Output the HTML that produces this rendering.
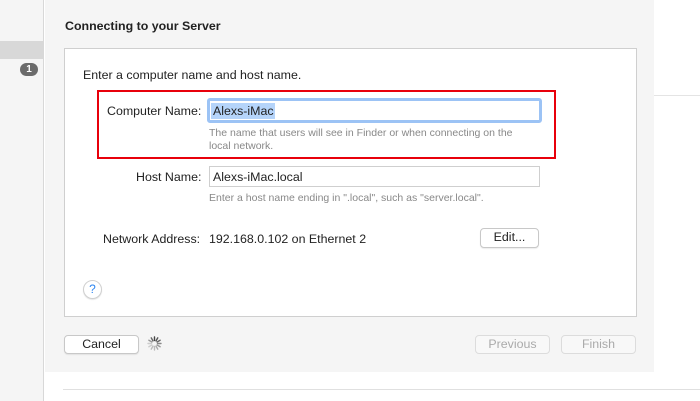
<!DOCTYPE html>
<html><head><style>
*{margin:0;padding:0;box-sizing:border-box}
body{width:700px;height:401px;background:#fff;position:relative;overflow:hidden;font-family:"Liberation Sans",sans-serif;font-size:12.4px;color:#222}
.a{position:absolute}
.t{position:absolute;white-space:nowrap}
.btn{position:absolute;background:#fff;border:1px solid #c8c8c8;border-radius:4px;text-align:center;font-size:12.4px;line-height:17px;box-shadow:0 1px 1px rgba(0,0,0,.08)}
.dis{color:#aaa;background:#f8f8f8;border-color:#dcdcdc;box-shadow:none}
.hint{position:absolute;color:#888;font-size:10.5px;white-space:nowrap}
</style></head><body>
<div class="a" style="left:0;top:0;width:44px;height:401px;background:#f5f5f5;border-right:1px solid #d8d8d8"></div>
<div class="a" style="left:0;top:41px;width:44px;height:18px;background:#d8d8d8"></div>
<div class="a" style="left:20px;top:63px;width:18px;height:13px;border-radius:7px;background:#6b6b6b;color:#fff;font-size:10px;font-weight:bold;text-align:center;line-height:13px">1</div>
<div class="a" style="left:45px;top:0;width:609px;height:372px;background:#f5f5f5"></div>
<div class="a" style="left:654px;top:95px;width:46px;height:1px;background:#e4e4e4"></div>
<div class="a" style="left:63px;top:389px;width:637px;height:1px;background:#e0e0e0"></div>
<div class="t" style="left:65px;top:19px;font-weight:bold;font-size:12.4px">Connecting to your Server</div>
<div class="a" style="left:64px;top:48px;width:573px;height:269px;background:#fff;border:1px solid #cfcfcf"></div>
<div class="t" style="left:83px;top:68px">Enter a computer name and host name.</div>
<div class="a" style="left:97px;top:90px;width:459px;height:69px;border:2px solid #e8000b"></div>
<div class="t" style="left:107px;top:104px">Computer Name:</div>
<div class="a" style="left:207px;top:98px;width:335px;height:25px;border:3px solid #9cc3f5;border-radius:3px;background:#fff"></div>
<div class="a" style="left:211px;top:103px;width:64px;height:16px;background:#b5d4fa"></div>
<div class="t" style="left:213px;top:104px">Alexs-iMac</div>
<div class="hint" style="left:209px;top:127px">The name that users will see in Finder or when connecting on the</div>
<div class="hint" style="left:209px;top:140px">local network.</div>
<div class="t" style="left:136px;top:170px">Host Name:</div>
<div class="a" style="left:209px;top:166px;width:331px;height:21px;border:1px solid #cfcfcf;background:#fff"></div>
<div class="t" style="left:213px;top:170px">Alexs-iMac.local</div>
<div class="hint" style="left:209px;top:192px">Enter a host name ending in ".local", such as "server.local".</div>
<div class="t" style="left:103px;top:232px">Network Address:</div>
<div class="t" style="left:209px;top:232px">192.168.0.102 on Ethernet 2</div>
<div class="btn" style="left:480px;top:228px;width:59px;height:20px">Edit...</div>
<div class="a" style="left:83px;top:280px;width:19px;height:19px;border-radius:50%;border:1px solid #d0d0d0;background:#fff;color:#2f86f0;text-align:center;line-height:17px;font-size:12px;box-shadow:0 1px 1px rgba(0,0,0,.1)">?</div>
<div class="btn" style="left:64px;top:335px;width:75px;height:19px">Cancel</div>
<svg class="a" style="left:147px;top:336px" width="15" height="15" viewBox="-7.5 -7.5 15 15">
<g stroke-width="1.4" stroke-linecap="round">
<line x1="0" y1="-3" x2="0" y2="-6.5" stroke="#444" transform="rotate(0)"/>
<line x1="0" y1="-3" x2="0" y2="-6.5" stroke="#555" transform="rotate(30)"/>
<line x1="0" y1="-3" x2="0" y2="-6.5" stroke="#666" transform="rotate(60)"/>
<line x1="0" y1="-3" x2="0" y2="-6.5" stroke="#888" transform="rotate(90)"/>
<line x1="0" y1="-3" x2="0" y2="-6.5" stroke="#999" transform="rotate(120)"/>
<line x1="0" y1="-3" x2="0" y2="-6.5" stroke="#aaa" transform="rotate(150)"/>
<line x1="0" y1="-3" x2="0" y2="-6.5" stroke="#bbb" transform="rotate(180)"/>
<line x1="0" y1="-3" x2="0" y2="-6.5" stroke="#bbb" transform="rotate(210)"/>
<line x1="0" y1="-3" x2="0" y2="-6.5" stroke="#ccc" transform="rotate(240)"/>
<line x1="0" y1="-3" x2="0" y2="-6.5" stroke="#ccc" transform="rotate(270)"/>
<line x1="0" y1="-3" x2="0" y2="-6.5" stroke="#999" transform="rotate(300)"/>
<line x1="0" y1="-3" x2="0" y2="-6.5" stroke="#666" transform="rotate(330)"/>
</g></svg>
<div class="btn dis" style="left:475px;top:335px;width:75px;height:19px">Previous</div>
<div class="btn dis" style="left:561px;top:335px;width:75px;height:19px">Finish</div>
</body></html>
